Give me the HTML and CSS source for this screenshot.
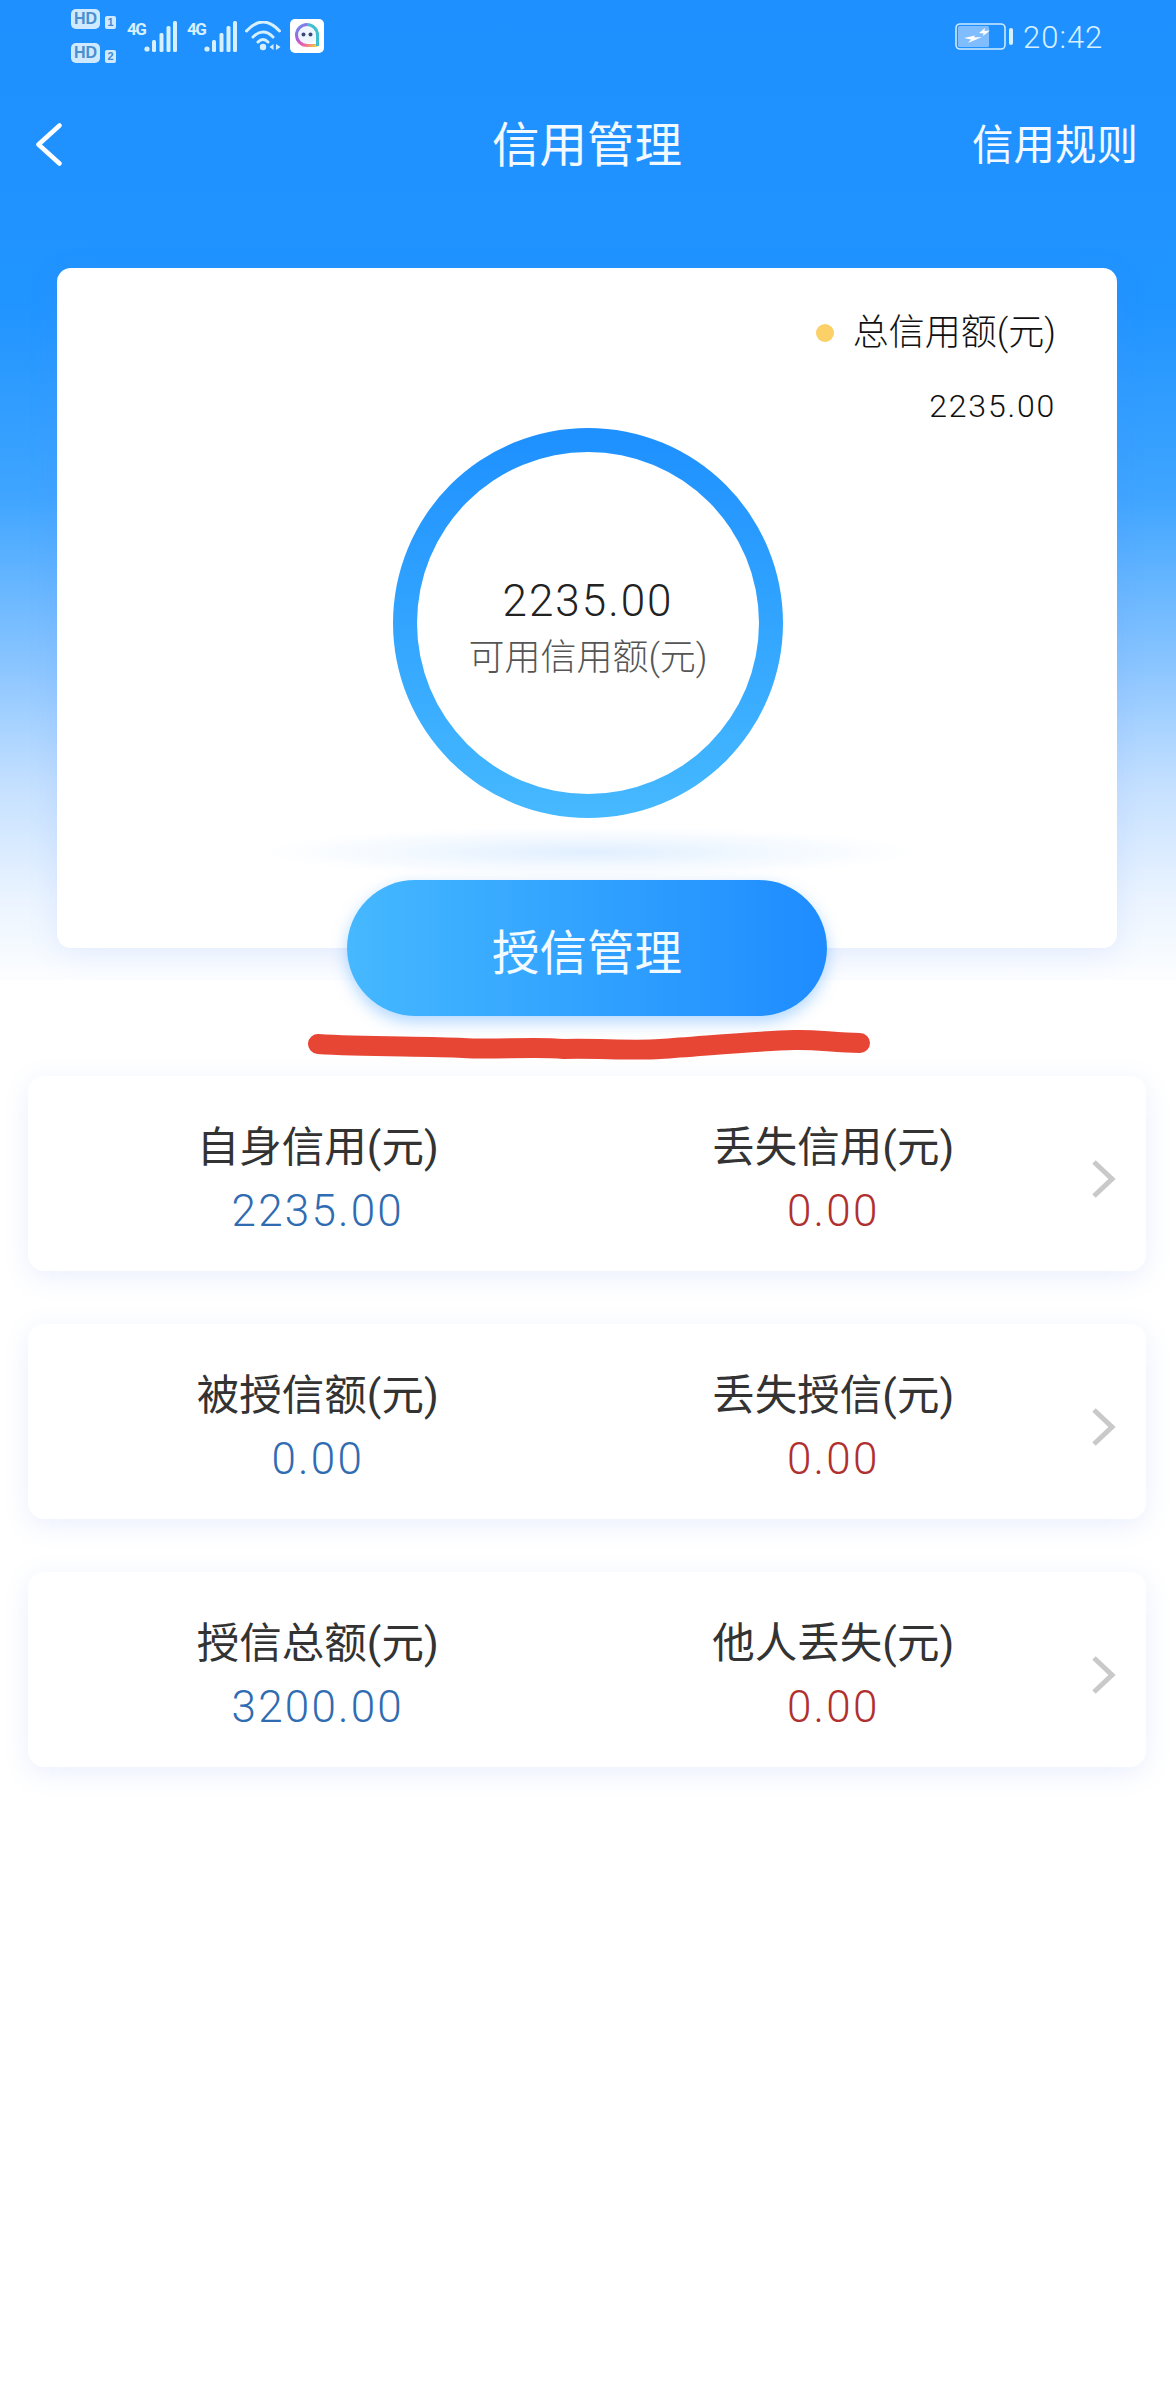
FILE: index.html
```html
<!DOCTYPE html>
<html lang="zh-CN">
<head>
    <meta charset="UTF-8">
    <title>信用管理</title>
    <link rel="stylesheet" href="styles.css">
</head>
<body>
<div class="page">
    <div class="top">
        <!-- status bar -->
        <div class="status">
            <div class="status-left">
                <div class="hd-stack">
                    <div class="hd-line"><span class="hd">HD</span><span class="sim">1</span></div>
                    <div class="hd-line"><span class="hd">HD</span><span class="sim">2</span></div>
                </div>
                <div class="net">
                    <span class="net-label">4G</span>
                    <svg class="bars" width="33" height="31" viewBox="0 0 33 31">
                        <circle cx="3" cy="28" r="2.6"/>
                        <rect x="8" y="19" width="4" height="12" rx="1.5"/>
                        <rect x="15.500" y="12" width="4" height="19" rx="1.5"/>
                        <rect x="22.500" y="5" width="4" height="26" rx="1.5"/>
                        <rect x="29" y="0" width="4" height="31" rx="1.5"/>
                    </svg>
                </div>
                <div class="net">
                    <span class="net-label">4G</span>
                    <svg class="bars" width="33" height="31" viewBox="0 0 33 31">
                        <circle cx="3" cy="28" r="2.6"/>
                        <rect x="8" y="19" width="4" height="12" rx="1.5"/>
                        <rect x="15.500" y="12" width="4" height="19" rx="1.5"/>
                        <rect x="22.500" y="5" width="4" height="26" rx="1.500"/>
                        <rect x="29" y="0" width="4" height="31" rx="1.5"/>
                    </svg>
                </div>
                <svg class="wifi" width="37" height="30" viewBox="0 0 37 30">
                    <path d="M1.500 10Q18 -8 34.500 10M8 16Q18 6 28 16M13 21Q18 16 23 21" fill="none" stroke="#d6f0ff" stroke-width="3" stroke-linecap="round"/>
                    <circle cx="18" cy="26" r="3.200" fill="#d6f0ff"/>
                    <path d="M28.500 23V29L24.500 26ZM31 23V29L35.500 26Z" fill="#d6f0ff"/>
                </svg>
                <svg class="app" width="34" height="34" viewBox="0 0 34 34">
                    <defs>
                        <linearGradient id="ringA" x1="0" y1="0" x2="1" y2="1">
                            <stop offset="0" stop-color="#5a9cf0"/>
                            <stop offset="0.35" stop-color="#a85fe0"/>
                            <stop offset="0.65" stop-color="#ee5fa8"/>
                            <stop offset="1" stop-color="#f6d23c"/>
                        </linearGradient>
                    </defs>
                    <rect width="34" height="34" rx="5" fill="#fff"/>
                    <circle cx="17" cy="16" r="9" fill="#eef6ff"/>
                    <path d="M17 5.500A10.500 10.500 0 0 0 17 26.500H27.500" fill="none" stroke="url(#ringA)" stroke-width="3"/>
                    <path d="M17 5.500A10.500 10.500 0 0 1 27.500 16V27" fill="none" stroke="#3fbfcf" stroke-width="3"/>
                    <circle cx="13.500" cy="15.500" r="2" fill="#3b4a78"/>
                    <circle cx="20.500" cy="15.500" r="2" fill="#3b4a78"/>
                </svg>
            </div>
            <div class="status-right">
                <svg class="battery" width="58" height="27" viewBox="0 0 58 27">
                    <rect x="1" y="1" width="49" height="25" rx="4" fill="none" stroke="#cfeaff" stroke-width="1.600"/>
                    <rect x="3" y="3" width="31" height="21" rx="1.500" fill="#7fbdff"/>
                    <path d="M9 15L20 12.500L19 14.500L27 14L13 20L16 16.500Z" fill="#fff"/>
                    <path d="M24 10L30 5L29.500 8L35 7.500L28 13L28.500 10.500Z" fill="#fff"/>
                    <rect x="54" y="5" width="4" height="17" rx="2" fill="#d6f0ff"/>
                </svg>
                <span class="time">20:42</span>
            </div>
        </div>

        <!-- nav -->
        <div class="nav">
            <svg class="back" width="26" height="43" viewBox="0 0 26 43">
                <path d="M23.500 2.500L2.500 21.500L23.500 40.500" fill="none" stroke="#fff" stroke-width="4.500" stroke-linecap="round" stroke-linejoin="round"/>
            </svg>
            <div class="nav-title">信用管理</div>
            <div class="nav-rule">信用规则</div>
        </div>

        <!-- card -->
        <div class="card">
            <div class="legend"><i class="dot"></i>总信用额(元)</div>
            <div class="legend-num">2235.00</div>
            <div class="ring">
                <div class="ring-in">
                    <div class="ring-num">2235.00</div>
                    <div class="ring-label">可用信用额(元)</div>
                </div>
            </div>
            <div class="ring-shadow"></div>
        </div>
        <div class="btn">授信管理</div>
    </div>

    <div class="rows">
        <div class="row">
            <div class="col">
                <div class="col-name">自身信用(元)</div>
                <div class="col-num blue">2235.00</div>
            </div>
            <div class="col">
                <div class="col-name">丢失信用(元)</div>
                <div class="col-num red">0.00</div>
            </div>
            <svg class="arrow" width="25" height="40" viewBox="0 0 25 40">
                <path d="M3 3L21 20L3 37" fill="none" stroke="#c9c9c9" stroke-width="5"/>
            </svg>
        </div>
        <div class="row">
            <div class="col">
                <div class="col-name">被授信额(元)</div>
                <div class="col-num blue">0.00</div>
            </div>
            <div class="col">
                <div class="col-name">丢失授信(元)</div>
                <div class="col-num red">0.00</div>
            </div>
            <svg class="arrow" width="25" height="40" viewBox="0 0 25 40">
                <path d="M3 3L21 20L3 37" fill="none" stroke="#c9c9c9" stroke-width="5"/>
            </svg>
        </div>
        <div class="row">
            <div class="col">
                <div class="col-name">授信总额(元)</div>
                <div class="col-num blue">3200.00</div>
            </div>
            <div class="col">
                <div class="col-name">他人丢失(元)</div>
                <div class="col-num red">0.00</div>
            </div>
            <svg class="arrow" width="25" height="40" viewBox="0 0 25 40">
                <path d="M3 3L21 20L3 37" fill="none" stroke="#c9c9c9" stroke-width="5"/>
            </svg>
        </div>
    </div>

    <!-- red marker stroke drawn over the screenshot -->
    <svg class="scribble" width="570" height="36" viewBox="0 0 570 36">
        <path d="M13 19C60 22 120 21 158 23C190 25 230 21 259 24C290 23 330 26 355 24C400 21 450 16 489 15C510 14 530 18 555 18" fill="none" stroke="#e84635" stroke-width="20" stroke-linecap="round"/>
    </svg>
</div>
</body>
</html>
```

FILE: styles.css
```css
* {
    box-sizing: border-box;
}

body {
    margin: 0;
    font-family: Roboto, "Noto Sans CJK SC", sans-serif;
    font-weight: 300;
    color: #333;
    background: #fff;
}

.page {
    width: 1176px;
    height: 2400px;
    position: relative;
    overflow: hidden;
}

.top {
    height: 980px;
    background: linear-gradient(180deg, #1e90ff 0, #2094ff 300px, #3fa5ff 496px, #8cc6ff 670px, #c4e0ff 785px, #ebf4ff 900px, #f6faff 950px, #fcfdff 980px);
    display: flex;
    flex-direction: column;
}

.top > * {
    flex-shrink: 0;
}

.status {
    height: 72px;
    padding: 0 73px 0 71px;
    display: flex;
    justify-content: space-between;
    align-items: center;
}

.status-left,
.status-right {
    display: flex;
    align-items: center;
}

.hd-stack {
    width: 45px;
    display: flex;
    flex-direction: column;
    gap: 14px;
    margin-right: 11px;
}

.hd-line {
    display: flex;
    align-items: flex-end;
    gap: 5px;
}

.hd {
    width: 29px;
    height: 20px;
    border-radius: 5px;
    background: #cfeaff;
    color: #4a8fd0;
    font: 700 16px/20px "Liberation Sans", sans-serif;
    text-align: center;
}

.sim {
    width: 11px;
    height: 13px;
    border-radius: 2px;
    background: #cfeaff;
    color: #3f8ad0;
    font: 700 11px/13px "Liberation Sans", sans-serif;
    text-align: center;
}

.net {
    display: flex;
    align-items: flex-end;
    height: 31px;
    margin-right: 10px;
}

.net-label {
    width: 17px;
    align-self: flex-start;
    color: #d6f0ff;
    font: 700 17px/14px Roboto, sans-serif;
    letter-spacing: -1.5px;
    margin-top: 1px;
}

.bars {
    fill: #d6f0ff;
}

.wifi {
    margin: 0 8px 0 -2px;
}

.time {
    width: 80px;
    margin-left: 10px;
    color: #d6f0ff;
    font-size: 31px;
    line-height: 34px;
    letter-spacing: 1px;
    padding-top: 4px;
}

.nav {
    height: 144px;
    padding: 0 38px 0 36px;
    display: grid;
    grid-template-columns: 1fr auto 1fr;
    align-items: center;
    color: #f2faff;
}

.nav-title {
    font-size: 47.5px;
    font-weight: 400;
    padding-bottom: 5px;
}

.nav-rule {
    font-size: 41.5px;
    font-weight: 400;
    padding-bottom: 5px;
    text-align: right;
}

.card {
    width: 1060px;
    height: 680px;
    margin: 52px 0 0 57px;
    padding: 43px 61px 0;
    background: #fff;
    border-radius: 14px;
    box-shadow: 0 6px 30px rgba(90, 130, 240, 0.12);
    display: flex;
    flex-direction: column;
    align-items: flex-end;
}

.legend {
    display: flex;
    align-items: center;
    font-size: 36px;
    line-height: 44px;
    color: #111;
}

.dot {
    width: 18px;
    height: 18px;
    border-radius: 50%;
    background: #fad067;
    margin-right: 19px;
}

.legend-num {
    margin-top: 31px;
    font-size: 32px;
    line-height: 40px;
    letter-spacing: 1.8px;
    color: #111;
}

.ring {
    width: 390px;
    height: 390px;
    margin: 2px 273px 0 0;
    padding: 24px;
    border-radius: 50%;
    background: linear-gradient(180deg, #1e90ff, #46b9ff);
}

.ring-in {
    width: 100%;
    height: 100%;
    padding-top: 10px;
    border-radius: 50%;
    background: #fff;
    display: flex;
    flex-direction: column;
    align-items: center;
    justify-content: center;
}

.ring-num {
    font-size: 44px;
    line-height: 52px;
    letter-spacing: 2px;
    color: #222;
}

.ring-label {
    margin-top: 7px;
    font-size: 36px;
    line-height: 48px;
    color: #555;
}

.ring-shadow {
    width: 660px;
    height: 50px;
    margin: 9px 138px 0 0;
    background: radial-gradient(closest-side, #e0efff, rgba(224, 239, 255, 0.35) 60%, rgba(224, 239, 255, 0));
}

.btn {
    width: 480px;
    height: 136px;
    margin: -68px 0 0 347px;
    padding-top: 9px;
    border-radius: 68px;
    background: linear-gradient(90deg, #45b8ff, #1e8cff);
    box-shadow: 0 6px 16px rgba(30, 140, 255, 0.35);
    color: #f2fbff;
    font-size: 47.5px;
    font-weight: 400;
    line-height: 130px;
    text-align: center;
}

.rows {
    margin: 96px 30px 0 28px;
    display: flex;
    flex-direction: column;
    gap: 53px;
}

.row {
    height: 195px;
    padding: 10px 30px 0 32px;
    background: #fff;
    border-radius: 16px;
    box-shadow: 0 6px 26px rgba(90, 130, 240, 0.13);
    display: flex;
    align-items: center;
}

.col {
    flex: 1;
    text-align: center;
}

.col-name {
    font-size: 42.5px;
    line-height: 56px;
    color: #333;
    font-weight: 400;
}

.col-num {
    margin-top: 9px;
    font-size: 44px;
    line-height: 52px;
    letter-spacing: 2.2px;
}

.blue {
    color: #2f6cb2;
}

.red {
    color: #b03030;
}

.scribble {
    position: absolute;
    left: 305px;
    top: 1025px;
}
```
